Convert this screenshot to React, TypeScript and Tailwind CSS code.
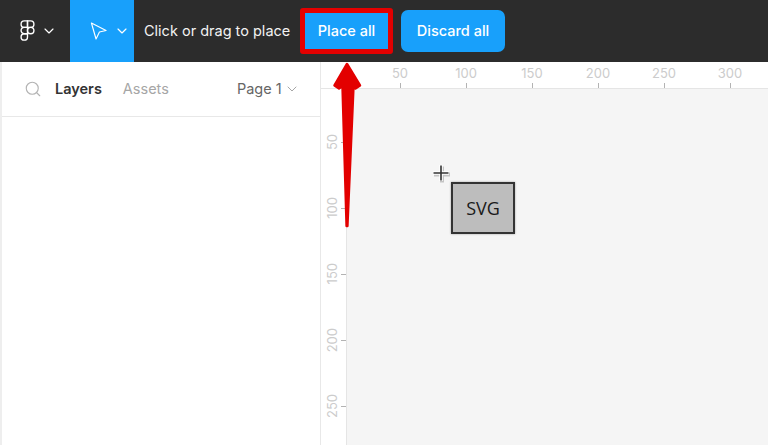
import { ChevronDown, Search } from "lucide-react";

const topTicks = [50, 100, 150, 200, 250, 300];
const sideTicks = [50, 100, 150, 200, 250];

function FigmaLogo() {
  return (
    <svg width="15" height="22" viewBox="0 0 16 24" fill="none" stroke="#ffffff" strokeWidth="1.5">
      <path d="M8 1H4.5a3.5 3.5 0 0 0 0 7H8V1Z" />
      <path d="M8 1h3.5a3.5 3.5 0 0 1 0 7H8V1Z" />
      <path d="M8 8H4.5a3.5 3.5 0 0 0 0 7H8V8Z" />
      <circle cx="11.5" cy="11.5" r="3.5" />
      <path d="M8 15H4.5A3.5 3.5 0 1 0 8 18.5V15Z" />
    </svg>
  );
}

function MoveIcon() {
  return (
    <svg width="17" height="20" viewBox="0 0 18 20" fill="none" stroke="#ffffff" strokeWidth="1.2" strokeLinejoin="round">
      <path d="M1.5 1.5 17 9.5l-7 1.6-3.6 7.4L1.5 1.5Z" />
    </svg>
  );
}

export default function App() {
  return (
    <div className="relative flex h-[445px] w-[768px] flex-col overflow-hidden bg-white font-['Inter',sans-serif]">
      <header className="flex h-[62px] shrink-0 items-center bg-[#2c2c2c] text-white">
        <div className="flex w-[70px] items-center pl-5">
          <FigmaLogo />
          <ChevronDown className="ml-[6px] h-4 w-4" strokeWidth={1.75} />
        </div>
        <div className="flex h-full w-[64px] items-center bg-[#18a0fb] pl-[20px]">
          <MoveIcon />
          <ChevronDown className="ml-[7px] h-4 w-4" strokeWidth={1.75} />
        </div>
        <span className="ml-[10px] w-[156px] whitespace-nowrap text-[14.5px] text-[#f2f2f2]">Click or drag to place</span>
        <button className="h-[46px] w-[93px] rounded-[3px] border-[5px] border-[#e30000] bg-[#18a0fb] text-[14.5px] font-medium">
          Place all
        </button>
        <button className="ml-2 h-[42px] w-[104px] rounded-[7px] bg-[#18a0fb] text-[14.5px] font-medium">Discard all</button>
      </header>

      <div className="flex min-h-0 flex-1">
        <aside className="w-[321px] shrink-0 border-r border-l-2 border-[#e8e8e8] border-l-[#eeeeee]">
          <div className="flex h-[55px] items-center border-b border-[#e8e8e8] pl-[22px] text-[14.5px]">
            <Search className="h-[18px] w-[18px] text-[#b3b3b3]" strokeWidth={1.5} />
            <span className="ml-[13px] font-semibold text-[#333333]">Layers</span>
            <span className="ml-[21px] text-[#a6a6a6]">Assets</span>
            <span className="ml-[68px] text-[#666666]">Page 1</span>
            <ChevronDown className="ml-[2px] h-4 w-4 text-[#a6a6a6]" strokeWidth={1.5} />
          </div>
        </aside>

        <div className="flex min-w-0 flex-1 flex-col">
          <div className="flex h-[27px] shrink-0 border-b border-[#e5e5e5] pl-[47px] pr-0">
            {topTicks.map((tick) => (
              <div key={tick} className="flex w-[66px] shrink-0 -translate-x-px flex-col items-center justify-end">
                <span className="text-[13px] leading-[14px] text-[#cccccc]">{tick}</span>
                <span className="mt-[3px] h-[5px] w-px bg-[#b3b3b3]" />
              </div>
            ))}
          </div>
          <div className="flex min-h-0 flex-1">
            <div className="flex w-[26px] shrink-0 flex-col border-r border-[#e5e5e5] pt-[20px]">
              {sideTicks.map((tick) => (
                <div key={tick} className="flex h-[66px] shrink-0 items-center justify-end">
                  <span className="mr-[2px] text-[13px] leading-[14px] text-[#cccccc] [writing-mode:vertical-rl] rotate-180">
                    {tick}
                  </span>
                  <span className="h-px w-[5px] bg-[#b3b3b3]" />
                </div>
              ))}
            </div>
            <div className="flex-1 bg-[#f5f5f5]" />
          </div>
        </div>
      </div>

      {/* annotation arrow */}
      <svg className="absolute left-[325px] top-[58px]" width="44" height="172" viewBox="0 0 44 172">
        <path
          d="M22 6 35 27.5 30.5 30.5 28.5 28 22.4 168 21.6 168 17.5 28 14 30.5 9.5 27.5Z"
          fill="#e30000"
          stroke="#e30000"
          strokeWidth="2.5"
          strokeLinejoin="round"
        />
      </svg>

      {/* placement cursor */}
      <svg className="absolute left-[431px] top-[163px]" width="21" height="21" viewBox="0 0 21 21">
        <path d="M11 3.5v16M3 11.5h16" stroke="#000000" strokeOpacity="0.2" strokeWidth="4" />
        <path d="M10 2v16M2 10h16" stroke="#ffffff" strokeWidth="3.5" />
        <path d="M10 2.5v15M2.5 10h15" stroke="#333333" strokeWidth="1.6" />
      </svg>

      <div className="absolute left-[451px] top-[182px] flex h-[52px] w-[64px] items-center justify-center border-2 border-[#333333] bg-[#bdbdbd] font-['Open_Sans',sans-serif] text-[18px] text-[#1a1a1a] shadow-[0_0_2px_rgba(0,0,0,0.35)]">
        SVG
      </div>
    </div>
  );
}
